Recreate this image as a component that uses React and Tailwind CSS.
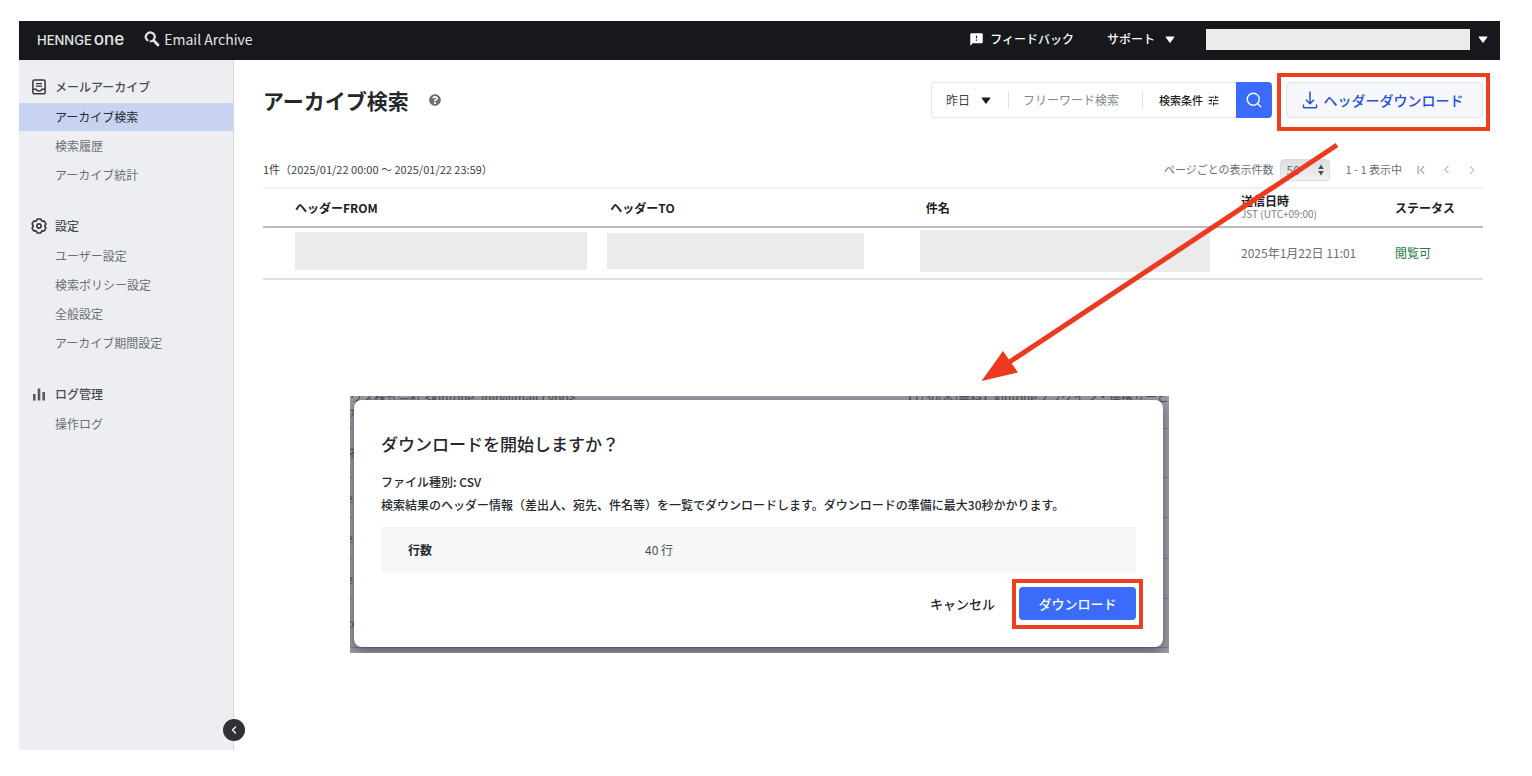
import { ChevronLeft, ChevronRight, ChevronFirst, Search } from "lucide-react";
import { MdFeedback, MdTune } from "react-icons/md";
import { FaQuestionCircle } from "react-icons/fa";

function Caret({ className }) {
  return (
    <svg viewBox="0 0 10 7" className={className} fill="currentColor" aria-hidden="true">
      <path d="M1.2 0.4h7.6a.6.6 0 0 1 .5.9L5.5 6.4a.6.6 0 0 1-1 0L.7 1.3a.6.6 0 0 1 .5-.9z" />
    </svg>
  );
}

function BrandSearchIcon() {
  return (
    <svg viewBox="0 0 16 16" className="size-4" fill="none" stroke="#e4e4e6" aria-hidden="true">
      <path d="M3.400 9.200A4.400 4.400 0 1 1 10.300 7.600" strokeWidth="2.2" strokeLinecap="round" />
      <path d="M5.600 10.300c2 .2 3.600-.5 4.600-2.300" strokeWidth="1.8" />
      <path d="M9.800 9.600l4.200 4.400" strokeWidth="2.800" strokeLinecap="round" />
    </svg>
  );
}

function ArchiveIcon() {
  return (
    <svg viewBox="0 0 14 16" className="h-4 w-3.5" fill="none" stroke="#33363b" strokeWidth="1.5" aria-hidden="true">
      <rect x="0.9" y="1" width="12.2" height="13.8" rx="1.4" />
      <path d="M4 4.6h6M4 7.2h6" strokeWidth="1.3" />
      <path d="M1 10.200h3.200c.4 1.300 1.500 1.900 2.800 1.900s2.400-.6 2.800-1.900H13" />
    </svg>
  );
}

function GearIcon() {
  return (
    <svg viewBox="0 0 16 16" className="size-4" fill="none" stroke="#33363b" strokeWidth="1.600" strokeLinejoin="round" aria-hidden="true">
      <path d="M6.400 1h3.200L10.900 3.100 13.300 3.100 14.900 5.900 13.700 8 14.900 10.100 13.300 12.900 10.900 12.900 9.600 15 6.400 15 5.100 12.900 2.700 12.900 1.100 10.100 2.300 8 1.100 5.900 2.700 3.100 5.100 3.100z" />
      <circle cx="8" cy="8" r="2.100" />
    </svg>
  );
}

function BarsIcon() {
  return (
    <svg viewBox="0 0 12 13" className="h-[13px] w-3" fill="#575a60" aria-hidden="true">
      <rect x="0" y="6" width="2.6" height="6.500" />
      <rect x="4.7" y="0.5" width="2.6" height="12" />
      <rect x="9.400" y="4" width="2.6" height="8.500" />
    </svg>
  );
}

function DownloadIcon() {
  return (
    <svg viewBox="0 0 16 18" className="h-[18px] w-4" fill="none" stroke="currentColor" strokeWidth="1.500" aria-hidden="true">
      <path d="M8 0.500v12M4 8.700l4 4 4-4" />
      <path d="M1.500 13.500v2.600c0 .4.3.7.7.7h11.600c.4 0 .7-.3.7-.7v-2.600" />
    </svg>
  );
}

const sections = [
  {
    title: "メールアーカイブ",
    icon: <ArchiveIcon />,
    items: ["アーカイブ検索", "検索履歴", "アーカイブ統計"],
  },
  {
    title: "設定",
    icon: <GearIcon />,
    items: ["ユーザー設定", "検索ポリシー設定", "全般設定", "アーカイブ期間設定"],
  },
  { title: "ログ管理", icon: <BarsIcon />, items: ["操作ログ"] },
];

function Sidebar() {
  return (
    <aside className="relative w-[215px] shrink-0 border-r border-[#d9dadf] bg-[#edeef2] pt-3">
      <nav className="flex flex-col gap-[22px]">
        {sections.map((section) => (
          <section key={section.title} className="flex flex-col gap-px">
            <h2 className="flex h-[30px] items-center text-[12px] font-medium text-[#4a4d53]">
              <span className="flex w-9 justify-center pl-1">{section.icon}</span>
              {section.title}
            </h2>
            {section.items.map((item) => (
              <a
                key={item}
                href="#"
                className={
                  item === "アーカイブ検索"
                    ? "flex h-7 items-center bg-[#c8d3f1] pl-9 text-[12px] text-[#26292f]"
                    : "flex h-7 items-center pl-9 text-[12px] text-[#6b6e73]"
                }
              >
                {item}
              </a>
            ))}
          </section>
        ))}
      </nav>
      <button
        type="button"
        aria-label="サイドバーを閉じる"
        className="absolute -right-3 bottom-[9px] flex size-[22px] items-center justify-center rounded-full bg-[#303135] text-white"
      >
        <ChevronLeft size={12} strokeWidth={2.5} />
      </button>
    </aside>
  );
}

function TopBar() {
  return (
    <header className="flex h-[39px] items-center bg-[#17181b] pr-3 pb-[3px] pl-[18px] text-white">
      <a href="#" className="flex items-baseline gap-0.5 font-['Inter',sans-serif] leading-none font-medium text-[#e4e4e6]">
        <span className="text-[13px]">HENNGE</span>
        <span className="text-[17px]">one</span>
      </a>
      <a href="#" className="ml-5 flex items-center gap-1 text-[14px] text-[#e4e4e6]">
        <BrandSearchIcon />
        Email Archive
      </a>
      <div className="ml-auto flex items-center text-[12px] font-medium">
        <button type="button" className="flex items-center gap-1.5">
          <MdFeedback size={15} />
          フィードバック
        </button>
        <button type="button" className="ml-[33px] flex items-center gap-2.5">
          サポート
          <Caret className="h-[7px] w-2.5" />
        </button>
        <button type="button" aria-label="アカウント" className="ml-[31px] flex items-center gap-2">
          <span className="block h-[21px] w-[264px] bg-[#ebebeb]" />
          <Caret className="h-[7px] w-2.5" />
        </button>
      </div>
    </header>
  );
}

function SearchBar() {
  return (
    <form className="flex h-9 items-stretch" onSubmit={(e) => e.preventDefault()}>
      <div className="flex items-center rounded-l border border-r-0 border-[#e6e8eb] text-[12px]">
        <div className="relative flex w-[76px] items-center">
          <select aria-label="期間" className="w-full appearance-none bg-transparent pl-3.5 text-[#3c3f44] outline-none">
            <option>昨日</option>
          </select>
          <Caret className="pointer-events-none absolute right-[17px] h-[7px] w-2.5 text-[#1c1e22]" />
        </div>
        <span className="h-[18px] w-px bg-[#dfe1e5]" />
        <input
          type="text"
          aria-label="フリーワード検索"
          placeholder="フリーワード検索"
          className="w-[133px] bg-transparent pl-3.5 outline-none placeholder:text-[#84878c]"
        />
        <span className="h-[18px] w-px bg-[#dfe1e5]" />
        <button type="button" className="flex items-center gap-1 pr-4 pl-4 text-[11px] font-medium text-[#1c1e22]">
          検索条件
          <MdTune size={13} />
        </button>
      </div>
      <button type="submit" aria-label="検索" className="flex w-9 items-center justify-center rounded-r bg-[#3a6bfb] text-white">
        <Search size={18} strokeWidth={1.8} />
      </button>
    </form>
  );
}

function Pager() {
  return (
    <div className="flex items-center text-[11px] text-[#6b6e73]">
      <label htmlFor="page-size" className="mr-1.5">
        ページごとの表示件数
      </label>
      <div className="relative flex h-[22px] w-[50px] items-center">
        <select
          id="page-size"
          className="size-full appearance-none rounded border border-[#dcdcdc] bg-linear-to-b from-[#dedede] to-[#f1f1f1] pl-1.5 text-[12px] outline-none"
        >
          <option>50</option>
        </select>
        <svg viewBox="0 0 6 12" className="pointer-events-none absolute right-1.5 h-3 w-1.5" fill="#4a4c50" aria-hidden="true">
          <path d="M3 0.500L5.800 5H.2zM3 11.500L5.800 7H.2z" />
        </svg>
      </div>
      <span className="ml-4">1 - 1 表示中</span>
      <div className="ml-3 flex items-center gap-3 text-[#85888e]">
        <button type="button" aria-label="最初のページ"><ChevronFirst size={14} strokeWidth={1.8} /></button>
        <button type="button" aria-label="前のページ"><ChevronLeft size={13} strokeWidth={1.8} /></button>
        <button type="button" aria-label="次のページ" className="pr-1 text-[#a8abb0]"><ChevronRight size={14} strokeWidth={1.8} /></button>
      </div>
    </div>
  );
}

function ResultTable() {
  return (
    <table className="w-full table-fixed border-collapse text-left text-[12px]">
      <colgroup>
        <col className="w-8" />
        <col />
        <col />
        <col />
        <col className="w-[154px]" />
        <col className="w-[88px]" />
      </colgroup>
      <thead>
        <tr className="h-[39px] border-t-2 border-b-2 border-t-[#f0f0f2] border-b-[#b7bcc8] text-[#1c1e22]">
          <td />
          <th className="font-bold">ヘッダーFROM</th>
          <th className="font-bold">ヘッダーTO</th>
          <th className="font-bold">件名</th>
          <th className="pb-0.5 leading-[13px] font-bold">
            送信日時
            <span className="block text-[10px] font-normal text-[#7b7e83]">JST (UTC+09:00)</span>
          </th>
          <th className="font-bold">ステータス</th>
        </tr>
      </thead>
      <tbody>
        <tr className="h-[52px] border-b-2 border-[#dfe0e4] text-[#6b6e73]">
          <td />
          <td className="pb-1"><div className="h-[38px] w-[292px] bg-[#ebebeb]" /></td>
          <td className="pb-1"><div className="-ml-[3px] h-9 w-[257px] bg-[#ebebeb]" /></td>
          <td className="pb-1"><div className="-ml-1.5 h-[42px] w-[290px] bg-[#ebebeb]" /></td>
          <td>2025年1月22日 11:01</td>
          <td className="text-[#23793f]">閲覧可</td>
        </tr>
      </tbody>
    </table>
  );
}

const backdropRows = [
  { height: "h-[49px]", text: "ネ" },
  { height: "h-10", text: "e" },
  { height: "h-[41px]", text: "e" },
  { height: "h-10", text: "e" },
  { height: "h-[49px]", text: "co" },
];

function DownloadDialog() {
  return (
    <div className="absolute top-[396px] left-[350px] w-[819px] overflow-hidden bg-[#9c9da2] px-1 pt-1 pb-1.5">
      <div aria-hidden="true" className="absolute inset-0 text-[12px] text-[#4c4e55]">
        <div className="-mt-[7px] flex h-10 border-b border-[#7c7e88] leading-[15px]">
          <div className="w-[560px] whitespace-nowrap">
            ウス株式会社 &lt;kintone_info@mail.cybo&gt;
            <br />が
          </div>
          <div className="whitespace-nowrap">【1/30(木)無料】kintoneプラグイン・連携サービ</div>
        </div>
        {backdropRows.map((row, i) => (
          <div key={i} className={`${row.height} flex items-center border-b border-[#7c7e88]`}>
            <span className="-ml-1">{row.text}</span>
          </div>
        ))}
      </div>
      <div
        role="dialog"
        aria-labelledby="dialog-title"
        className="relative mr-0.5 rounded-lg bg-white px-[27px] pt-8 pb-[27px] text-[#25282d] shadow-[0_4px_12px_rgba(40,44,70,0.6)]"
      >
        <h2 id="dialog-title" className="text-[17px] leading-6 font-medium">ダウンロードを開始しますか？</h2>
        <p className="mt-3.5 text-[12px] leading-[23px] font-medium">
          ファイル種別: CSV
          <br />
          検索結果のヘッダー情報（差出人、宛先、件名等）を一覧でダウンロードします。ダウンロードの準備に最大30秒かかります。
        </p>
        <dl className="mt-[11px] flex h-[46px] items-center bg-[#f6f7f9] pl-[27px] text-[12px]">
          <dt className="w-[237px] font-bold">行数</dt>
          <dd className="text-[#4c4f54]">40 行</dd>
        </dl>
        <div className="mt-3.5 flex items-center justify-end gap-6 text-[13px] font-medium">
          <button type="button">キャンセル</button>
          <div className="relative">
            <button type="button" className="block h-[33px] w-[117px] rounded bg-[#3a6bfb] text-white">
              ダウンロード
            </button>
            <span className="pointer-events-none absolute -inset-x-[7px] -top-2 -bottom-[9px] border-4 border-[#eb3f1f]" />
          </div>
        </div>
      </div>
    </div>
  );
}

function Arrow() {
  return (
    <svg viewBox="0 0 360 242" className="pointer-events-none absolute top-[141px] left-[980px] h-[242px] w-[360px]" aria-hidden="true">
      <path d="M357 4L28 222" stroke="#eb3a20" strokeWidth="5" fill="none" />
      <path d="M1.500 240L23 210l15 21.500z" fill="#eb3a20" />
    </svg>
  );
}

export default function App() {
  return (
    <div className="relative flex min-h-screen flex-col bg-white pt-[21px] pr-8 pb-[26px] pl-[19px] font-['Noto_Sans_CJK_JP',sans-serif]">
      <TopBar />
      <div className="flex flex-1">
        <Sidebar />
        <main className="min-w-0 flex-1 pt-[22px] pr-[17px] pl-[29px]">
          <div className="flex items-center">
            <h1 className="text-[21px] leading-[34px] font-bold text-[#25282d]">アーカイブ検索</h1>
            <button type="button" aria-label="ヘルプ" className="ml-5 text-[#6b6e73]">
              <FaQuestionCircle size={12} />
            </button>
            <div className="ml-auto flex items-center gap-3.5">
              <SearchBar />
              <div className="relative">
                <button
                  type="button"
                  className="flex h-9 w-[197px] items-center justify-center gap-1.5 rounded border border-[#dfe2e8] bg-[#f6f7fa] pr-1 text-[14px] font-medium text-[#2450d8]"
                >
                  <DownloadIcon />
                  ヘッダーダウンロード
                </button>
                <span className="pointer-events-none absolute -top-[9px] -right-[7px] -bottom-[13px] -left-[9px] border-4 border-[#eb3f1f]" />
              </div>
            </div>
          </div>
          <div className="mt-[34px] flex h-[35px] items-center justify-between">
            <p className="text-[11px] text-[#3c3f44]">1件（2025/01/22 00:00 ～ 2025/01/22 23:59）</p>
            <Pager />
          </div>
          <ResultTable />
        </main>
      </div>
      <Arrow />
      <DownloadDialog />
    </div>
  );
}
